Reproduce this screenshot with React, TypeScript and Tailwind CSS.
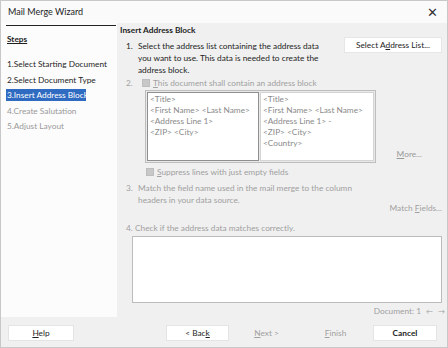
import React from "react";

const font = { fontFamily: 'Lato, "Noto Sans", sans-serif' };

function Check() {
  return <span className="inline-block w-[8px] h-[8px] bg-[#c8c8c8] border border-[#bdbdbd] mr-[3px]" />;
}

export default function App() {
  return (
    <div style={font} className="w-[448px] h-[348px] bg-[#f0f0f0] flex flex-col text-[8.3px] leading-[12px] text-[#1e1e1e] overflow-hidden border border-[#c8c8c8]">
      {/* title bar */}
      <div className="h-[22px] bg-[#fafafa] flex items-center justify-between pl-[7px] pr-[9px] shrink-0">
        <span className="text-[9px]">Mail Merge Wizard</span>
        <span className="text-[13px] leading-none text-[#333]">✕</span>
      </div>
      <div className="flex flex-1 min-h-0">
        {/* left pane */}
        <div className="w-[116px] bg-[#fcfcfc] shrink-0 pl-[5px] pt-[2px]">
          <div className="h-px bg-[#222] mr-[1px]" />
          <div className="mt-[7px] pl-[1px] font-bold underline">Steps</div>
          <div className="mt-[13px] flex flex-col gap-[3.5px]">
            <div className="pl-[1px] whitespace-nowrap">1.Select Starting Document</div>
            <div className="pl-[1px] whitespace-nowrap">2.Select Document Type</div>
            <div className="pl-[1px] bg-[#2f6bc1] text-white w-[80px] whitespace-nowrap">3.Insert Address Block</div>
            <div className="pl-[1px] text-[#9a9a9a] whitespace-nowrap">4.Create Salutation</div>
            <div className="pl-[1px] text-[#9a9a9a] whitespace-nowrap">5.Adjust Layout</div>
          </div>
        </div>
        {/* right pane */}
        <div className="flex-1 flex flex-col pl-[3px] pr-[5px] pt-[1px]">
          <div className="font-bold">Insert Address Block</div>
          <div className="flex mt-[4px]">
            <span className="w-[18px] pl-[6px] shrink-0">1.</span>
            <span className="w-[182px] shrink-0">Select the address list containing the address data you want to use. This data is needed to create the address block.</span>
            <div className="flex-1 flex justify-end">
              <div className="w-[98px] h-[16px] bg-white flex items-center justify-center border border-[#e6e6e6] mt-[-3px]">
                <span>Select A<span className="underline">d</span>dress List...</span>
              </div>
            </div>
          </div>
          <div className="flex items-center mt-[1px] text-[#a0a0a0]">
            <span className="w-[22px] pl-[6px] shrink-0">2.</span>
            <Check />
            <span><span className="underline">T</span>his document shall contain an address block</span>
          </div>
          <div className="flex mt-[1px]">
            <div className="ml-[25px] w-[231px] h-[73px] border border-[#bdbdbd] bg-[#e9e9e9] flex p-[1px] gap-[1px] shrink-0">
              <div className="w-[112px] bg-white border border-[#8f8f8f] pl-[2px] pt-[1px] text-[#8a8a8a] leading-[11px]">
                <div>&lt;Title&gt;</div>
                <div>&lt;First Name&gt; &lt;Last Name&gt;</div>
                <div>&lt;Address Line 1&gt;</div>
                <div>&lt;ZIP&gt; &lt;City&gt;</div>
              </div>
              <div className="flex-1 bg-white border border-[#d4d4d4] pl-[2px] pt-[1px] text-[#8a8a8a] leading-[11px]">
                <div>&lt;Title&gt;</div>
                <div>&lt;First Name&gt; &lt;Last Name&gt;</div>
                <div>&lt;Address Line 1&gt; -</div>
                <div>&lt;ZIP&gt; &lt;City&gt;</div>
                <div>&lt;Country&gt;</div>
              </div>
            </div>
            <div className="flex-1 flex items-end justify-end pr-[20px] text-[#9a9a9a]">
              <span className="mb-[3px]"><span className="underline">M</span>ore...</span>
            </div>
          </div>
          <div className="flex items-center mt-[3px] ml-[26px] text-[#a0a0a0]">
            <Check />
            <span><span className="underline">S</span>uppress lines with just empty fields</span>
          </div>
          <div className="flex mt-[4px] text-[#a0a0a0]">
            <span className="w-[18px] pl-[6px] shrink-0">3.</span>
            <span className="w-[230px]">Match the field name used in the mail merge to the column headers in your data source.</span>
          </div>
          <div className="flex justify-end text-[#a0a0a0] mt-[-4px]">
            <span>Match <span className="underline">F</span>ields...</span>
          </div>
          <div className="flex mt-[8px] text-[#a0a0a0]">
            <span className="w-[15px] pl-[6px] shrink-0">4.</span>
            <span>Check if the address data matches correctly.</span>
          </div>
          <div className="ml-[12px] mt-[2px] h-[71px] bg-white border border-[#bcbcbc]" />
          <div className="flex justify-end items-center mt-[2px] mr-[-3px] text-[#a0a0a0] gap-[5px]">
            <span>Document: 1</span>
            <span className="text-[7px]">←</span>
            <span className="text-[7px]">→</span>
          </div>
        </div>
      </div>
      {/* bottom bar */}
      <div className="h-[30px] shrink-0 flex items-center pl-[7px] pr-[10px] pt-[1px]">
        <div className="w-[66px] h-[16px] bg-white border border-[#e4e4e4] flex items-center justify-center">
          <span><span className="underline">H</span>elp</span>
        </div>
        <div className="flex-1" />
        <div className="flex gap-[6px]">
          <div className="w-[63px] h-[16px] bg-white border border-[#e4e4e4] flex items-center justify-center">
            <span>&lt; Bac<span className="underline">k</span></span>
          </div>
          <div className="w-[63px] h-[16px] flex items-center justify-center text-[#a0a0a0]">
            <span><span className="underline">N</span>ext &gt;</span>
          </div>
          <div className="w-[63px] h-[16px] flex items-center justify-center text-[#a0a0a0]">
            <span><span className="underline">F</span>inish</span>
          </div>
          <div className="w-[64px] h-[16px] bg-white border border-[#e4e4e4] flex items-center justify-center font-bold">
            <span>Cancel</span>
          </div>
        </div>
      </div>
    </div>
  );
}
